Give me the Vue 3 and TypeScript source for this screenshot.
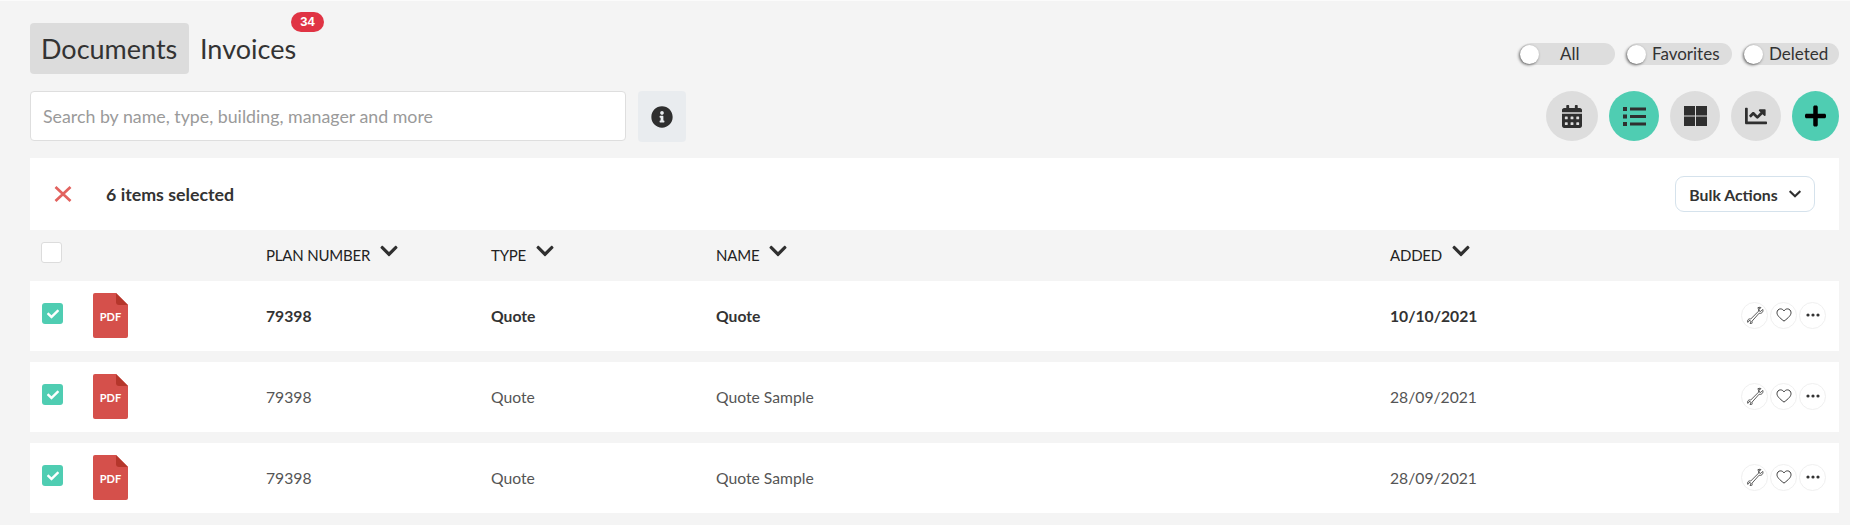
<script setup lang="ts">
interface Row { name: string; date: string; bold: boolean }
const rows: Row[] = [
  { name: 'Quote', date: '10/10/2021', bold: true },
  { name: 'Quote Sample', date: '28/09/2021', bold: false },
  { name: 'Quote Sample', date: '28/09/2021', bold: false },
]
const columns = ['PLAN NUMBER', 'TYPE', 'NAME', 'ADDED']
const toggles = [
  { label: 'All', cls: 'all' },
  { label: 'Favorites', cls: 'fav' },
  { label: 'Deleted', cls: 'del' },
]
const chevron = 'M207.029 381.476L12.686 187.132c-9.373-9.373-9.373-24.569 0-33.941l22.667-22.667c9.357-9.357 24.522-9.375 33.901-.04L224 284.505l154.745-154.021c9.379-9.335 24.544-9.317 33.901.04l22.667 22.667c9.373 9.373 9.373 24.569 0 33.941L240.971 381.476c-9.373 9.372-24.569 9.372-33.942 0z'
const check = 'M173.898 439.404l-166.4-166.4c-9.997-9.997-9.997-26.206 0-36.204l36.203-36.204c9.997-9.998 26.207-9.998 36.204 0L192 312.69 432.095 72.596c9.997-9.997 26.207-9.997 36.204 0l36.203 36.204c9.997 9.997 9.997 26.206 0 36.204l-294.4 294.401c-9.998 9.997-26.207 9.997-36.204-.001z'
</script>

<template>
  <div class="page">
    <div class="top">
      <div class="tabs">
        <div class="tab active">Documents</div>
        <div class="tab invoices">Invoices<span class="badge">34</span></div>
      </div>
      <div class="toggles">
        <div v-for="t in toggles" :key="t.label" class="toggle" :class="t.cls">
          <span class="knob"></span><span class="toggle-label">{{ t.label }}</span>
        </div>
      </div>
    </div>

    <div class="tools">
      <div class="search">Search by name, type, building, manager and more</div>
      <div class="info">
        <svg viewBox="0 0 512 512" width="22" height="22"><path fill="#2f2f2f" d="M256 8C119.043 8 8 119.083 8 256c0 136.997 111.043 248 248 248s248-111.003 248-248C504 119.083 392.957 8 256 8zm0 110c23.196 0 42 18.804 42 42s-18.804 42-42 42-42-18.804-42-42 18.804-42 42-42zm56 254c0 6.627-5.373 12-12 12h-88c-6.627 0-12-5.373-12-12v-24c0-6.627 5.373-12 12-12h12v-64h-12c-6.627 0-12-5.373-12-12v-24c0-6.627 5.373-12 12-12h64c6.627 0 12 5.373 12 12v100h12c6.627 0 12 5.373 12 12v24z"/></svg>
      </div>
      <div class="round-group">
        <div class="round cal">
          <svg viewBox="0 0 448 512" width="20" height="23"><path fill="#2f2f2f" d="M0 464c0 26.5 21.5 48 48 48h352c26.5 0 48-21.5 48-48V192H0v272zm320-196c0-6.6 5.4-12 12-12h40c6.6 0 12 5.4 12 12v40c0 6.6-5.4 12-12 12h-40c-6.6 0-12-5.4-12-12v-40zm0 128c0-6.6 5.4-12 12-12h40c6.6 0 12 5.4 12 12v40c0 6.6-5.4 12-12 12h-40c-6.6 0-12-5.4-12-12v-40zM192 268c0-6.6 5.4-12 12-12h40c6.6 0 12 5.4 12 12v40c0 6.6-5.4 12-12 12h-40c-6.6 0-12-5.4-12-12v-40zm0 128c0-6.6 5.4-12 12-12h40c6.6 0 12 5.4 12 12v40c0 6.6-5.4 12-12 12h-40c-6.6 0-12-5.4-12-12v-40zM64 268c0-6.6 5.4-12 12-12h40c6.6 0 12 5.4 12 12v40c0 6.6-5.4 12-12 12H76c-6.6 0-12-5.4-12-12v-40zm0 128c0-6.6 5.4-12 12-12h40c6.6 0 12 5.4 12 12v40c0 6.6-5.4 12-12 12H76c-6.6 0-12-5.4-12-12v-40zM400 64h-48V16c0-8.8-7.2-16-16-16h-32c-8.8 0-16 7.2-16 16v48H160V16c0-8.8-7.2-16-16-16h-32c-8.8 0-16 7.2-16 16v48H48C21.5 64 0 85.500 0 112v48h448v-48c0-26.500-21.500-48-48-48z"/></svg>
        </div>
        <div class="round teal">
          <svg viewBox="0 0 23 19" width="23" height="19"><g fill="#2f2f2f"><rect x="0" y="0" width="4" height="4"/><rect x="0" y="7.5" width="4" height="4"/><rect x="0" y="15" width="4" height="4"/><rect x="7" y="0.5" width="16" height="3"/><rect x="7" y="8" width="16" height="3"/><rect x="7" y="15.5" width="16" height="3"/></g></svg>
        </div>
        <div class="round">
          <svg viewBox="0 0 23 20" width="23" height="20"><g fill="#2f2f2f"><rect x="0" y="0" width="11" height="9.5"/><rect x="12" y="0" width="11" height="9.5"/><rect x="0" y="10.5" width="11" height="9.5"/><rect x="12" y="10.5" width="11" height="9.5"/></g></svg>
        </div>
        <div class="round">
          <svg viewBox="0 0 512 512" width="22" height="22"><path fill="#2f2f2f" d="M496 384H64V80c0-8.84-7.16-16-16-16H16C7.16 64 0 71.16 0 80v336c0 17.67 14.33 32 32 32h464c8.84 0 16-7.16 16-16v-32c0-8.84-7.16-16-16-16zM464 96H345.94c-21.38 0-32.09 25.85-16.97 40.97l32.4 32.4L288 242.75l-73.37-73.37c-12.5-12.5-32.76-12.5-45.25 0l-68.69 68.69c-6.25 6.25-6.25 16.38 0 22.63l22.62 22.62c6.25 6.25 16.38 6.25 22.63 0L192 237.25l73.37 73.37c12.5 12.5 32.76 12.5 45.25 0l96-96 32.4 32.4c15.12 15.12 40.97 4.41 40.97-16.97V112c0-8.84-7.16-16-16-16z"/></svg>
        </div>
        <div class="round teal plus">
          <svg viewBox="0 0 448 512" width="21" height="24"><path fill="#000" d="M416 208H272V64c0-17.67-14.33-32-32-32h-32c-17.67 0-32 14.33-32 32v144H32c-17.67 0-32 14.33-32 32v32c0 17.67 14.33 32 32 32h144v144c0 17.67 14.33 32 32 32h32c17.67 0 32-14.33 32-32V304h144c17.67 0 32-14.33 32-32v-32c0-17.67-14.33-32-32-32z"/></svg>
        </div>
      </div>
    </div>

    <div class="selbar">
      <svg class="close" viewBox="0 0 18 16" width="18" height="16"><path d="M1.5 1 L16.5 15 M16.5 1 L1.5 15" stroke="#e2625e" stroke-width="2.7" fill="none"/></svg>
      <span class="sel-text">6 items selected</span>
      <div class="bulk">
        Bulk Actions
        <svg viewBox="0 0 448 512" width="12" height="14"><path fill="#2f2f2f" :d="chevron"/></svg>
      </div>
    </div>

    <div class="grid head">
      <div class="cell-check"><span class="box"></span></div>
      <div></div>
      <div v-for="c in columns" :key="c" class="hcell">
        <span>{{ c }}</span>
        <svg viewBox="0 0 448 512" width="18" height="20"><path fill="#2f2f2f" :d="chevron"/></svg>
      </div>
      <div></div>
    </div>

    <div v-for="(r, i) in rows" :key="i" class="grid row" :class="{ bold: r.bold }">
      <div class="cell-check">
        <span class="tick"><svg viewBox="0 0 512 512" width="12" height="12"><path fill="#fff" :d="check"/></svg></span>
      </div>
      <div class="pdf">
        <svg viewBox="0 0 35 45" width="35" height="45">
          <path d="M2 0H23L35 12V43a2 2 0 0 1-2 2H2a2 2 0 0 1-2-2V2a2 2 0 0 1 2-2z" fill="#d5504b"/>
          <path d="M23 0L35 12H26a3 3 0 0 1-3-3z" fill="#b5362b"/>
        </svg>
        <span class="pdf-label">PDF</span>
      </div>
      <div>79398</div>
      <div>Quote</div>
      <div>{{ r.name }}</div>
      <div>{{ r.date }}</div>
      <div class="actions">
        <span class="act">
          <svg viewBox="0 0 20 20" width="18" height="18"><path d="M13 2.200c1.200-.9 2.600-.9 3.600-.4l-2.200 2.200.4 1.600 1.600.4 2.200-2.200c.5 1.200.2 2.600-.7 3.500-1 .9-2.200 1.100-3.300.7L6.700 16.900c.4 1.100.1 2.100-.6 2.800l-1.600-.1 1.100-2-.8-1.300-1.500-.1-1.300 2c-.6-1.100-.4-2.300.4-3.100.8-.8 1.800-1 2.800-.6l8.900-8.900c-.4-1.200-.1-2.500 1.100-3.500z" fill="none" stroke="#333" stroke-width="0.9"/></svg>
        </span>
        <span class="act">
          <svg viewBox="0 0 18 16" width="16" height="14"><path d="M9 15C3.500 10.800 1 8.300 1 5.300 1 2.900 2.800 1 5 1c1.700 0 3.200 1 4 2.400C9.800 2 11.300 1 13 1c2.200 0 4 1.900 4 4.300 0 3-2.500 5.500-8 9.700z" fill="none" stroke="#333" stroke-width="1.100"/></svg>
        </span>
        <span class="act">
          <svg viewBox="0 0 14 4" width="14" height="4"><circle cx="2" cy="2" r="1.600" fill="#333"/><circle cx="7" cy="2" r="1.600" fill="#333"/><circle cx="12" cy="2" r="1.600" fill="#333"/></svg>
        </span>
      </div>
    </div>
  </div>
</template>

<style>
html, body { margin: 0; background: #f4f4f4; }
</style>

<style scoped>
.page {
  box-sizing: border-box;
  width: 1850px;
  height: 525px;
  padding: 22px 11px 0 30px;
  background: #f4f4f4;
  border-top: 1px solid #fbfbfb;
  font-family: Lato, "Liberation Sans", sans-serif;
  color: #333;
  overflow: hidden;
}
.top {
  display: flex;
  justify-content: space-between;
  align-items: flex-start;
  height: 51px;
  margin-bottom: 17px;
}
.tabs { display: flex; height: 51px; }
.tab {
  position: relative;
  display: flex;
  align-items: center;
  font-size: 27px;
  font-weight: 400;
  padding: 0 11px;
  border-radius: 4px;
  color: #333;
}
.tab.active { background: #dcdcdc; width: 159px; box-sizing: border-box; }
.badge {
  position: absolute;
  top: -11px;
  right: -17px;
  width: 33px;
  height: 20px;
  border-radius: 10px;
  background: #e03444;
  color: #fff;
  font-size: 13px;
  font-weight: 700;
  text-align: center;
  line-height: 20px;
  font-family: "Liberation Sans", sans-serif;
}
.toggles { display: flex; gap: 12px; margin-top: 20px; }
.toggle {
  display: flex;
  align-items: center;
  height: 22px;
  border-radius: 11px;
  background: #dddddd;
  font-size: 17px;
  color: #333;
}
.toggle.all { width: 95px; }
.toggle.fav { width: 105px; }
.toggle.del { width: 95px; }
.knob {
  flex: none;
  width: 19px;
  height: 19px;
  border-radius: 50%;
  background: #fff;
  box-shadow: -1px 1px 3px rgba(0, 0, 0, 0.6);
}
.toggle.all .toggle-label { margin-left: 21px; }
.toggle-label { margin-left: 6px; line-height: 20px; }
.tools { display: flex; align-items: flex-start; height: 50px; margin-bottom: 17px; }
.search {
  box-sizing: border-box;
  width: 596px;
  height: 50px;
  background: #fff;
  border: 1px solid #dedede;
  border-radius: 4px;
  padding-left: 12px;
  line-height: 49px;
  font-size: 17.8px;
  color: #9a9a9a;
}
.info {
  width: 48px;
  height: 51px;
  margin-left: 12px;
  background: #e9ecef;
  border-radius: 4px;
  display: flex;
  align-items: center;
  justify-content: center;
}
.round-group { margin-left: auto; display: flex; gap: 11px; }
.round {
  width: 50px;
  height: 50px;
  border-radius: 50%;
  background: #dddddd;
  display: flex;
  align-items: center;
  justify-content: center;
}
.round.cal { width: 52px; }
.round.teal { background: #4fcdb2; }
.round.plus { width: 47px; }
.selbar {
  display: flex;
  align-items: center;
  height: 72px;
  background: #fff;
}
.close { margin-left: 24px; }
.sel-text { margin-left: 34px; font-size: 17.8px; font-weight: 700; color: #333; }
.bulk {
  box-sizing: border-box;
  margin-left: auto;
  margin-right: 24px;
  width: 140px;
  height: 36px;
  border: 1px solid #d5e2ec;
  border-radius: 9px;
  display: flex;
  align-items: center;
  justify-content: center;
  gap: 11px;
  font-size: 15.8px;
  font-weight: 700;
  color: #333;
}
.grid {
  display: grid;
  grid-template-columns: 63px 173px 225px 225px 674px 1fr auto;
  align-items: center;
}
.head { height: 51px; font-size: 15px; }
.hcell { display: flex; align-items: center; gap: 10px; font-weight: 400; color: #222; letter-spacing: -0.2px; margin-bottom: 2px; }
.hcell svg { position: relative; top: -4px; }
.row {
  box-sizing: border-box;
  height: 70px;
  padding-bottom: 1px;
  margin-bottom: 11px;
  background: #fff;
  font-size: 15.7px;
  color: #555;
}
.row.bold { font-weight: 700; color: #333; }
.cell-check { padding-left: 11px; display: flex; }
.box {
  box-sizing: border-box;
  display: block;
  width: 21px;
  height: 21px;
  margin-bottom: 7px;
  background: #fff;
  border: 1px solid #dcdcdc;
  border-radius: 3px;
}
.tick {
  margin-left: 1px;
  margin-bottom: 4px;
  width: 21px;
  height: 21px;
  border-radius: 3px;
  background: #4fcdb2;
  display: flex;
  align-items: center;
  justify-content: center;
}
.pdf {
  position: relative;
  width: 35px;
  height: 45px;
}
.pdf svg { display: block; }
.pdf-label {
  position: absolute;
  left: 0;
  right: 0;
  top: 17px;
  text-align: center;
  font-size: 11px;
  font-weight: 700;
  color: #fff;
  line-height: 14px;
}
.actions { display: flex; gap: 2px; justify-content: flex-end; padding-right: 13px; margin-bottom: 1px; }
.act {
  box-sizing: border-box;
  width: 27px;
  height: 27px;
  border: 1px solid #f0f0f0;
  border-radius: 50%;
  display: flex;
  align-items: center;
  justify-content: center;
}
</style>
